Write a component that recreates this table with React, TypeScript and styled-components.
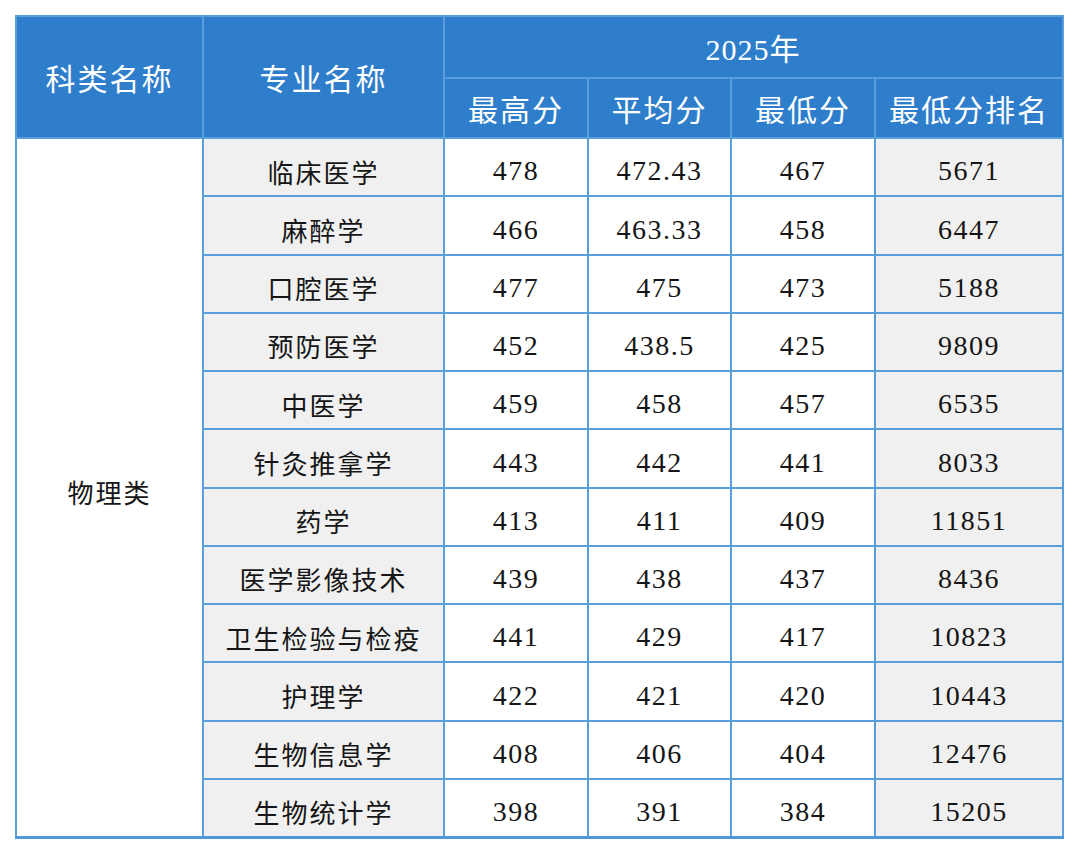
import React from "react";
import styled, { createGlobalStyle } from "styled-components";

const GlobalStyle = createGlobalStyle`
  html, body { margin: 0; padding: 0; background: #ffffff; }
  body { font-family: "Noto Sans CJK SC", "Noto Sans", sans-serif; }
`;

const Page = styled.div`
  padding: 15px 0 0 15px;
`;

const Table = styled.table`
  border-collapse: collapse;
  table-layout: fixed;
  width: 1047px;
  border: 2px solid #5a9fdc;
  border-bottom: 3px solid #4f97d8;
`;

const HeadCell = styled.th<{ $h?: number }>`
  background: #2e7ecb;
  color: #ffffff;
  font-family: "Noto Sans CJK SC", sans-serif;
  font-weight: 400;
  font-size: 30px;
  letter-spacing: 2px;
  text-align: center;
  vertical-align: middle;
  border: 2px solid #5a9fdc;
  padding: 0;
  height: ${(p) => (p.$h ? `${p.$h}px` : "auto")};
`;

const YearText = styled.span`
  font-family: "Liberation Serif", "Noto Sans CJK SC", serif;
  letter-spacing: 1px;
`;

const YearChar = styled.span`
  font-family: "Noto Sans CJK SC", sans-serif;
`;

const Row = styled.tr`
  height: 58.25px;
`;

const Cell = styled.td<{ $gray?: boolean; $num?: boolean }>`
  background: ${(p) => (p.$gray ? "#f0f0f0" : "#ffffff")};
  color: #151515;
  font-family: ${(p) =>
    p.$num
      ? `"Liberation Serif", "Noto Sans CJK SC", serif`
      : `"Noto Sans CJK SC", sans-serif`};
  font-size: ${(p) => (p.$num ? "28px" : "26px")};
  letter-spacing: ${(p) => (p.$num ? "1.5px" : "2px")};
  line-height: 1.2;
  text-align: center;
  vertical-align: middle;
  border: 2px solid #5a9fdc;
  padding: 8px 0 0;
  white-space: nowrap;
`;

const rows: [string, string, string, string, string][] = [
  ["临床医学", "478", "472.43", "467", "5671"],
  ["麻醉学", "466", "463.33", "458", "6447"],
  ["口腔医学", "477", "475", "473", "5188"],
  ["预防医学", "452", "438.5", "425", "9809"],
  ["中医学", "459", "458", "457", "6535"],
  ["针灸推拿学", "443", "442", "441", "8033"],
  ["药学", "413", "411", "409", "11851"],
  ["医学影像技术", "439", "438", "437", "8436"],
  ["卫生检验与检疫", "441", "429", "417", "10823"],
  ["护理学", "422", "421", "420", "10443"],
  ["生物信息学", "408", "406", "404", "12476"],
  ["生物统计学", "398", "391", "384", "15205"],
];

export default function App() {
  return (
    <Page>
      <GlobalStyle />
      <Table>
        <colgroup>
          <col style={{ width: 187 }} />
          <col style={{ width: 241 }} />
          <col style={{ width: 144 }} />
          <col style={{ width: 143 }} />
          <col style={{ width: 144 }} />
          <col style={{ width: 188 }} />
        </colgroup>
        <thead>
          <tr>
            <HeadCell rowSpan={2}>科类名称</HeadCell>
            <HeadCell rowSpan={2}>专业名称</HeadCell>
            <HeadCell colSpan={4} $h={60}>
              <YearText>2025</YearText>
              <YearChar>年</YearChar>
            </HeadCell>
          </tr>
          <tr>
            <HeadCell $h={58}>最高分</HeadCell>
            <HeadCell>平均分</HeadCell>
            <HeadCell>最低分</HeadCell>
            <HeadCell>最低分排名</HeadCell>
          </tr>
        </thead>
        <tbody>
          {rows.map((r, i) => (
            <Row key={r[0]}>
              {i === 0 && <Cell rowSpan={rows.length}>物理类</Cell>}
              <Cell $gray>{r[0]}</Cell>
              <Cell $num>{r[1]}</Cell>
              <Cell $num>{r[2]}</Cell>
              <Cell $num>{r[3]}</Cell>
              <Cell $num $gray>{r[4]}</Cell>
            </Row>
          ))}
        </tbody>
      </Table>
    </Page>
  );
}
